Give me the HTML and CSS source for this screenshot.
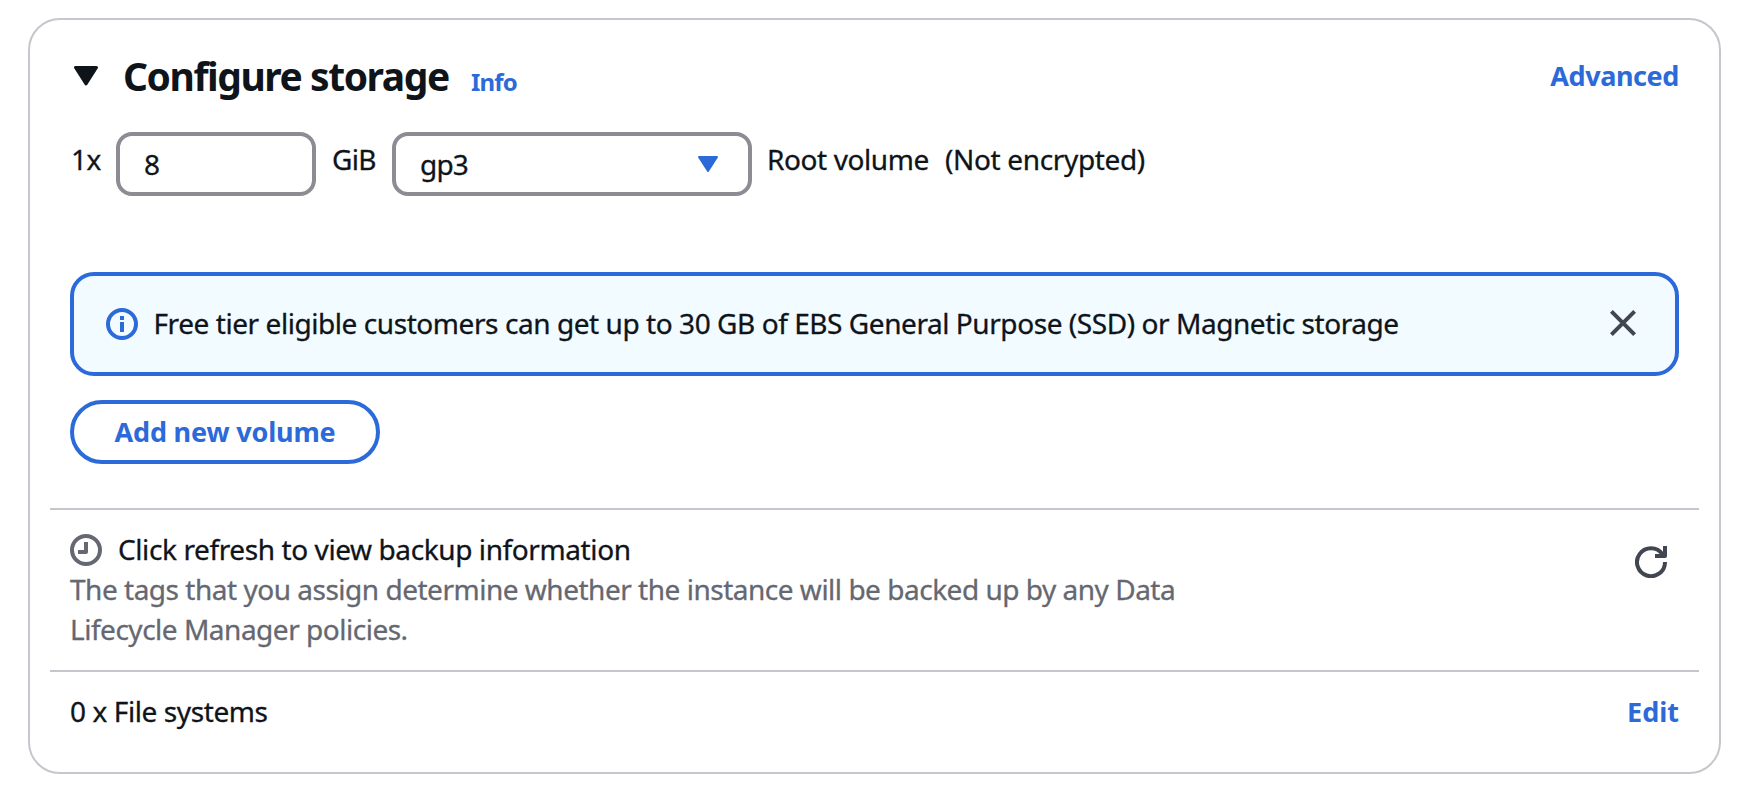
FILE: index.html
```html
<!DOCTYPE html>
<html lang="en">
<head>
<meta charset="utf-8">
<title>Configure storage</title>
<link rel="stylesheet" href="styles.css">
</head>
<body>
<section class="card">
  <header class="card-header">
    <svg class="caret" viewBox="0 0 24 20"><path d="M1.5 1.5H22.5L12 18Z" fill="currentColor" stroke="currentColor" stroke-width="3" stroke-linejoin="round"/></svg>
    <div class="heading">
      <h2 class="title">Configure storage</h2>
      <a class="link info">Info</a>
    </div>
    <a class="link advanced">Advanced</a>
  </header>
  <div class="volume-row">
    <span class="label count">1x</span>
    <div class="field size">8</div>
    <span class="label unit">GiB</span>
    <div class="field type">
      <span>gp3</span>
      <svg class="select-caret" viewBox="0 0 20 16"><path d="M1 1H19L10 15Z" fill="currentColor" stroke="currentColor" stroke-width="2" stroke-linejoin="round"/></svg>
    </div>
    <span class="label root">Root volume</span>
    <span class="label encrypted">(Not encrypted)</span>
  </div>
  <div class="alert">
    <svg class="info-icon" viewBox="0 0 32 32"><circle cx="16" cy="16" r="14" fill="none" stroke="currentColor" stroke-width="4"/><path d="M14 8h4v4h-4zM14 14h4v10h-4z" fill="currentColor"/></svg>
    <span class="alert-text">Free tier eligible customers can get up to 30 GB of EBS General Purpose (SSD) or Magnetic storage</span>
    <svg class="close" viewBox="0 0 26 26"><path d="M1.4 1.4 24.6 24.6M24.6 1.4 1.4 24.6" fill="none" stroke="currentColor" stroke-width="4"/></svg>
  </div>
  <button class="add">Add new volume</button>
  <div class="backup">
    <div class="backup-copy">
      <div class="backup-title">
        <svg class="clock" viewBox="0 0 32 32"><circle cx="16" cy="16" r="14" fill="none" stroke="currentColor" stroke-width="4"/><path d="M16 8V18H8" fill="none" stroke="currentColor" stroke-width="4" stroke-linejoin="round"/></svg>
        <span class="backup-heading">Click refresh to view backup information</span>
      </div>
      <p class="backup-text">The tags that you assign determine whether the instance will be backed up by any Data<br>Lifecycle Manager policies.</p>
    </div>
    <svg class="refresh" viewBox="0 0 32 32"><path d="M30 16A14 14 0 1 1 27.5 8.2L28.6 10M30 0V10H20" fill="none" stroke="currentColor" stroke-width="4" stroke-linejoin="round"/></svg>
  </div>
  <div class="files">
    <span class="files-text">0 x File systems</span>
    <a class="link edit">Edit</a>
  </div>
</section>
</body>
</html>
```
FILE: styles.css
```css
* { box-sizing: border-box; }

body {
  margin: 0;
  padding: 18px 21px 0 28px;
  background: #fff;
  color: #0f141a;
  font: 28px/40px "Noto Sans", sans-serif;
  -webkit-text-stroke: .3px currentColor;
  white-space: nowrap;
}

svg { flex: none; display: block; }

.card {
  height: 756px;
  border: 2px solid #c6c6cd;
  border-radius: 32px;
  padding: 31px 20px 0;
}

.link { color: #2b6ad8; font-size: 27px; font-weight: 700; -webkit-text-stroke: 0; }

/* Header */
.card-header {
  display: flex;
  align-items: flex-start;
  height: 81px;
  padding: 0 20px 0 24px;
}
.caret { width: 24px; height: 20px; margin: 15px 26px 0 0; }
.heading { display: flex; align-items: baseline; margin-left: -1px; }
.title { margin: 0; width: 324px; font-size: 39px; line-height: 50px; letter-spacing: -1.45px; -webkit-text-stroke: 0; }
.info { margin-left: 24px; font-size: 24px; letter-spacing: -.8px; }
.advanced { margin: 5px 0 0 auto; letter-spacing: -.4px; }

/* Root volume row */
.volume-row {
  display: flex;
  align-items: flex-start;
  height: 140px;
  padding-left: 20px;
}
.label { margin-top: 7px; }
.count { width: 45px; margin-left: 1px; letter-spacing: -.5px; }
.field {
  display: flex;
  justify-content: space-between;
  height: 64px;
  padding: 8px 24px;
  border: 4px solid #8c8c94;
  border-radius: 16px;
}
.size { width: 200px; }
.type { width: 360px; padding-right: 30px; letter-spacing: -.8px; }
.select-caret { width: 20px; height: 16px; margin-top: 12px; color: #2b6ad8; }
.unit { width: 60px; margin-left: 16px; letter-spacing: -.7px; }
.root { width: 162px; margin-left: 15px; letter-spacing: -.4px; }
.encrypted { margin-left: 16px; letter-spacing: -.35px; }

/* Free tier notice */
.alert {
  display: flex;
  align-items: flex-start;
  height: 104px;
  margin: 0 20px;
  padding: 32px;
  border: 4px solid #2b6ad8;
  border-radius: 24px;
  background: #f2fbff;
}
.info-icon { width: 32px; height: 32px; color: #2b6ad8; }
.alert-text { margin: -5px 0 0 15.5px; letter-spacing: -.435px; }
.close { width: 26px; height: 26px; margin: 2px 7px 0 auto; color: #424650; }

.add {
  display: block;
  width: 310px;
  height: 64px;
  margin: 24px 20px 44px;
  padding: 0;
  border: 4px solid #2b6ad8;
  border-radius: 32px;
  background: #fff;
  color: #2b6ad8;
  font: 700 27px/40px "Noto Sans", sans-serif;
  letter-spacing: -.17px;
  -webkit-text-stroke: 0;
}

/* Backup information */
.backup {
  display: flex;
  justify-content: space-between;
  height: 164px;
  padding: 19px 32px 0 20px;
  border-top: 2px solid #c6c6cd;
  border-bottom: 2px solid #c6c6cd;
}
.backup-title { display: flex; }
.clock { width: 32px; height: 32px; margin-top: 5px; color: #656871; }
.backup-heading { margin-left: 16px; letter-spacing: -.4px; }
.backup-text { margin: 0; color: #656871; letter-spacing: -.485px; }
.refresh { width: 32px; height: 32px; margin-top: 17px; color: #424650; }

/* File systems */
.files {
  display: flex;
  justify-content: space-between;
  padding: 19px 20px 0;
}
.files-text { letter-spacing: -.4px; }
.edit { margin-top: 1px; }
```
